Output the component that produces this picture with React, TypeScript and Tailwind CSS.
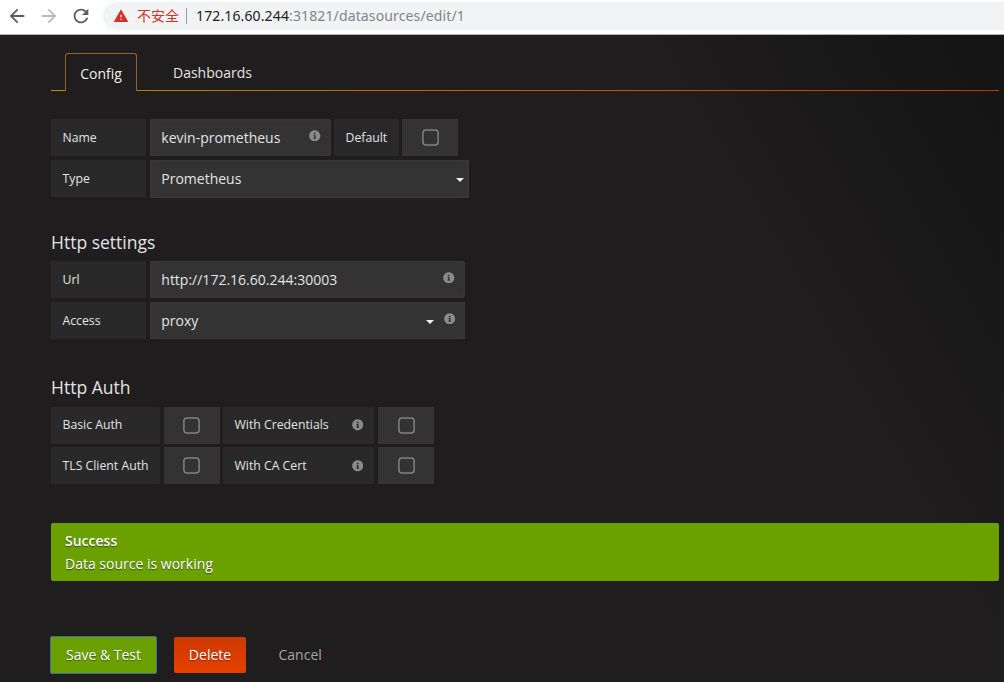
import React from "react";
import { FaInfoCircle } from "react-icons/fa";
import { MdArrowBack, MdArrowForward, MdRefresh, MdWarning } from "react-icons/md";

function Label({ className, children }: { className: string; children: React.ReactNode }) {
  return (
    <div className={`flex h-[37px] shrink-0 items-center rounded-[1px] bg-[#292929] pl-[11.5px] text-[12.25px] whitespace-nowrap ${className}`}>
      {children}
    </div>
  );
}

function Field({ className, children }: { className: string; children: React.ReactNode }) {
  return (
    <div className={`flex shrink-0 items-center border border-[#373737] bg-[#333333] pl-[10.3px] text-[14px] whitespace-nowrap shadow-[inset_0_0_5px_rgba(60,60,60,0.5)] ${className}`}>
      {children}
    </div>
  );
}

function Check({ className = "" }: { className?: string }) {
  return (
    <div className={`flex h-[37px] w-14 shrink-0 items-center justify-center bg-[#333333] ${className}`}>
      <svg className="size-[17px] fill-none stroke-[#828282]" viewBox="0 0 17 17">
        <rect x="0.9" y="0.9" width="15.2" height="15.2" rx="3" strokeWidth="1.5" />
      </svg>
    </div>
  );
}

function Info({ className = "" }: { className?: string }) {
  return <FaInfoCircle className={`size-[11.5px] text-[#8b8b8b] ${className}`} />;
}

function Caret({ className = "" }: { className?: string }) {
  return (
    <svg className={`h-1 w-2 fill-[#eeeeee] ${className}`} viewBox="0 0 8 4">
      <path d="M0 0h8L4 4z" />
    </svg>
  );
}

export default function App() {
  return (
    <div className="flex h-[682px] w-[1004px] flex-col overflow-hidden bg-[#1f1d1d] font-['Open_Sans',sans-serif] text-[#e3e3e3]">
      <header className="flex h-[35px] shrink-0 items-start border-b border-[#aeb2b5] bg-white pt-[2px]">
        <div className="flex h-7 w-[103px] shrink-0 items-center">
          <MdArrowBack className="ml-[6px] size-[22px] text-[#5a5d61]" />
          <MdArrowForward className="ml-[10px] size-[22px] text-[#bababa]" />
          <MdRefresh className="ml-[10px] size-[22px] text-[#5a5d61]" />
        </div>
        <div className="flex h-7 flex-1 items-center rounded-l-full bg-[#f1f3f4]">
          <MdWarning className="ml-[10px] size-4 text-[#d93025]" />
          <span className="ml-2 w-[42px] pb-[2px] font-['Noto_Sans_CJK_SC',sans-serif] text-[14px] leading-6 whitespace-nowrap text-[#d93025]">不安全</span>
          <span className="ml-[7px] h-4 w-px bg-[#9aa0a6]" />
          <span className="ml-[9px] font-['Noto_Sans',sans-serif] text-[14px] leading-7 tracking-[0.13px] whitespace-nowrap text-[#202124]">
            172.16.60.244<span className="text-[#80868b]">:31821/datasources/edit/1</span>
          </span>
        </div>
      </header>

      <main className="flex flex-1 flex-col bg-[linear-gradient(60deg,transparent_74%,#141414_99%)] pt-[18px] pr-[5px] pl-[51px]">
        <nav className="flex h-[38px] shrink-0 items-end text-[14px]">
          <span className="h-px w-[15px] bg-[#bc8c04]" />
          <div className="-ml-px flex h-[38px] w-[72px] items-center justify-center rounded-t-[3px] border border-b-0 border-[#9d6027] pt-[2px] text-[#ededed]">Config</div>
          <div className="flex h-[38px] flex-1 flex-col">
            <span className="flex h-[37px] items-center pt-[2px] pl-9">Dashboards</span>
            <span className="h-px bg-linear-to-r from-[#b77d0c] to-[#bd330c]" />
          </div>
        </nav>

        <section className="mt-7 flex flex-col gap-1">
          <div className="flex">
            <Label className="w-[95px] pt-[2px]">Name</Label>
            <Field className="ml-1 h-[37px] w-[181px] rounded-r-[2px]">
              <span className="flex-1">kevin-prometheus</span>
              <Info className="mr-[9.3px] mb-1" />
            </Field>
            <Label className="ml-[3px] w-[65px] pt-[2px]">Default</Label>
            <Check className="ml-[3px]" />
          </div>
          <div className="flex">
            <Label className="w-[95px] pt-[2px]">Type</Label>
            <Field className="ml-1 h-[38px] w-[319px]">
              <span className="flex-1 pb-[2px]">Prometheus</span>
              <Caret className="mt-[2px] mr-1" />
            </Field>
          </div>
        </section>

        <section className="mt-[30px]">
          <h2 className="flex h-7 items-center text-[17.5px]">Http settings</h2>
          <div className="mt-[5px] flex flex-col gap-1">
            <div className="flex">
              <Label className="w-[95px] pt-[2px]">Url</Label>
              <Field className="ml-1 h-[37px] w-[315px] rounded-r-[2px]">
                <span className="flex-1">http://172.16.60.244:30003</span>
                <Info className="mr-[9.3px] mb-1" />
              </Field>
            </div>
            <div className="flex">
              <Label className="w-[95px] pt-[2px]">Access</Label>
              <Field className="ml-1 h-[37px] w-[315px]">
                <span className="flex-1">proxy</span>
                <Caret className="mt-[3px] mr-[10px]" />
                <Info className="mr-[8.8px] mb-1" />
              </Field>
            </div>
          </div>
        </section>

        <section className="mt-[34px]">
          <h2 className="flex h-7 items-center text-[17.5px]">Http Auth</h2>
          <div className="mt-[6px] flex flex-col gap-[3px]">
            {[
              ["Basic Auth", "With Credentials", ""],
              ["TLS Client Auth", "With CA Cert", "pt-[2px]"],
            ].map(([left, right, shift]) => (
              <div key={left} className="flex">
                <Label className={`w-[109px] ${shift}`}>{left}</Label>
                <Check className="ml-1 pr-px" />
                <Label className={`ml-[3px] w-[151px] ${shift}`}>
                  <span className="flex-1">{right}</span>
                  <Info className="mr-[10.8px] mb-px" />
                </Label>
                <Check className="ml-1" />
              </div>
            ))}
          </div>
        </section>

        <div className="mt-[39px] h-[58px] shrink-0 rounded-[2px] bg-[#6aa000] pt-[6px] pl-[14px] text-[14px] leading-[23px] text-white [text-shadow:0_1px_1px_rgba(0,0,0,0.5)]">
          <div className="font-semibold">Success</div>
          <div>Data source is working</div>
        </div>

        <div className="mt-[56px] flex h-9 shrink-0 items-center text-[14px]">
          <button className="h-9 w-[105px] rounded-[1px] bg-[#6aa000] pb-[2px] whitespace-nowrap text-white ring-1 ring-[#3e6f94] [text-shadow:0_1px_1px_rgba(0,0,0,0.4)]">Save &amp; Test</button>
          <button className="ml-[18px] h-9 w-[72px] rounded-[2px] bg-linear-to-b from-[#cc3900] to-[#e64000] pb-[2px] text-white [text-shadow:0_1px_1px_rgba(0,0,0,0.4)]">Delete</button>
          <button className="ml-[32.5px] pb-[2px] text-[#a5a5a5]">Cancel</button>
        </div>
      </main>
    </div>
  );
}
